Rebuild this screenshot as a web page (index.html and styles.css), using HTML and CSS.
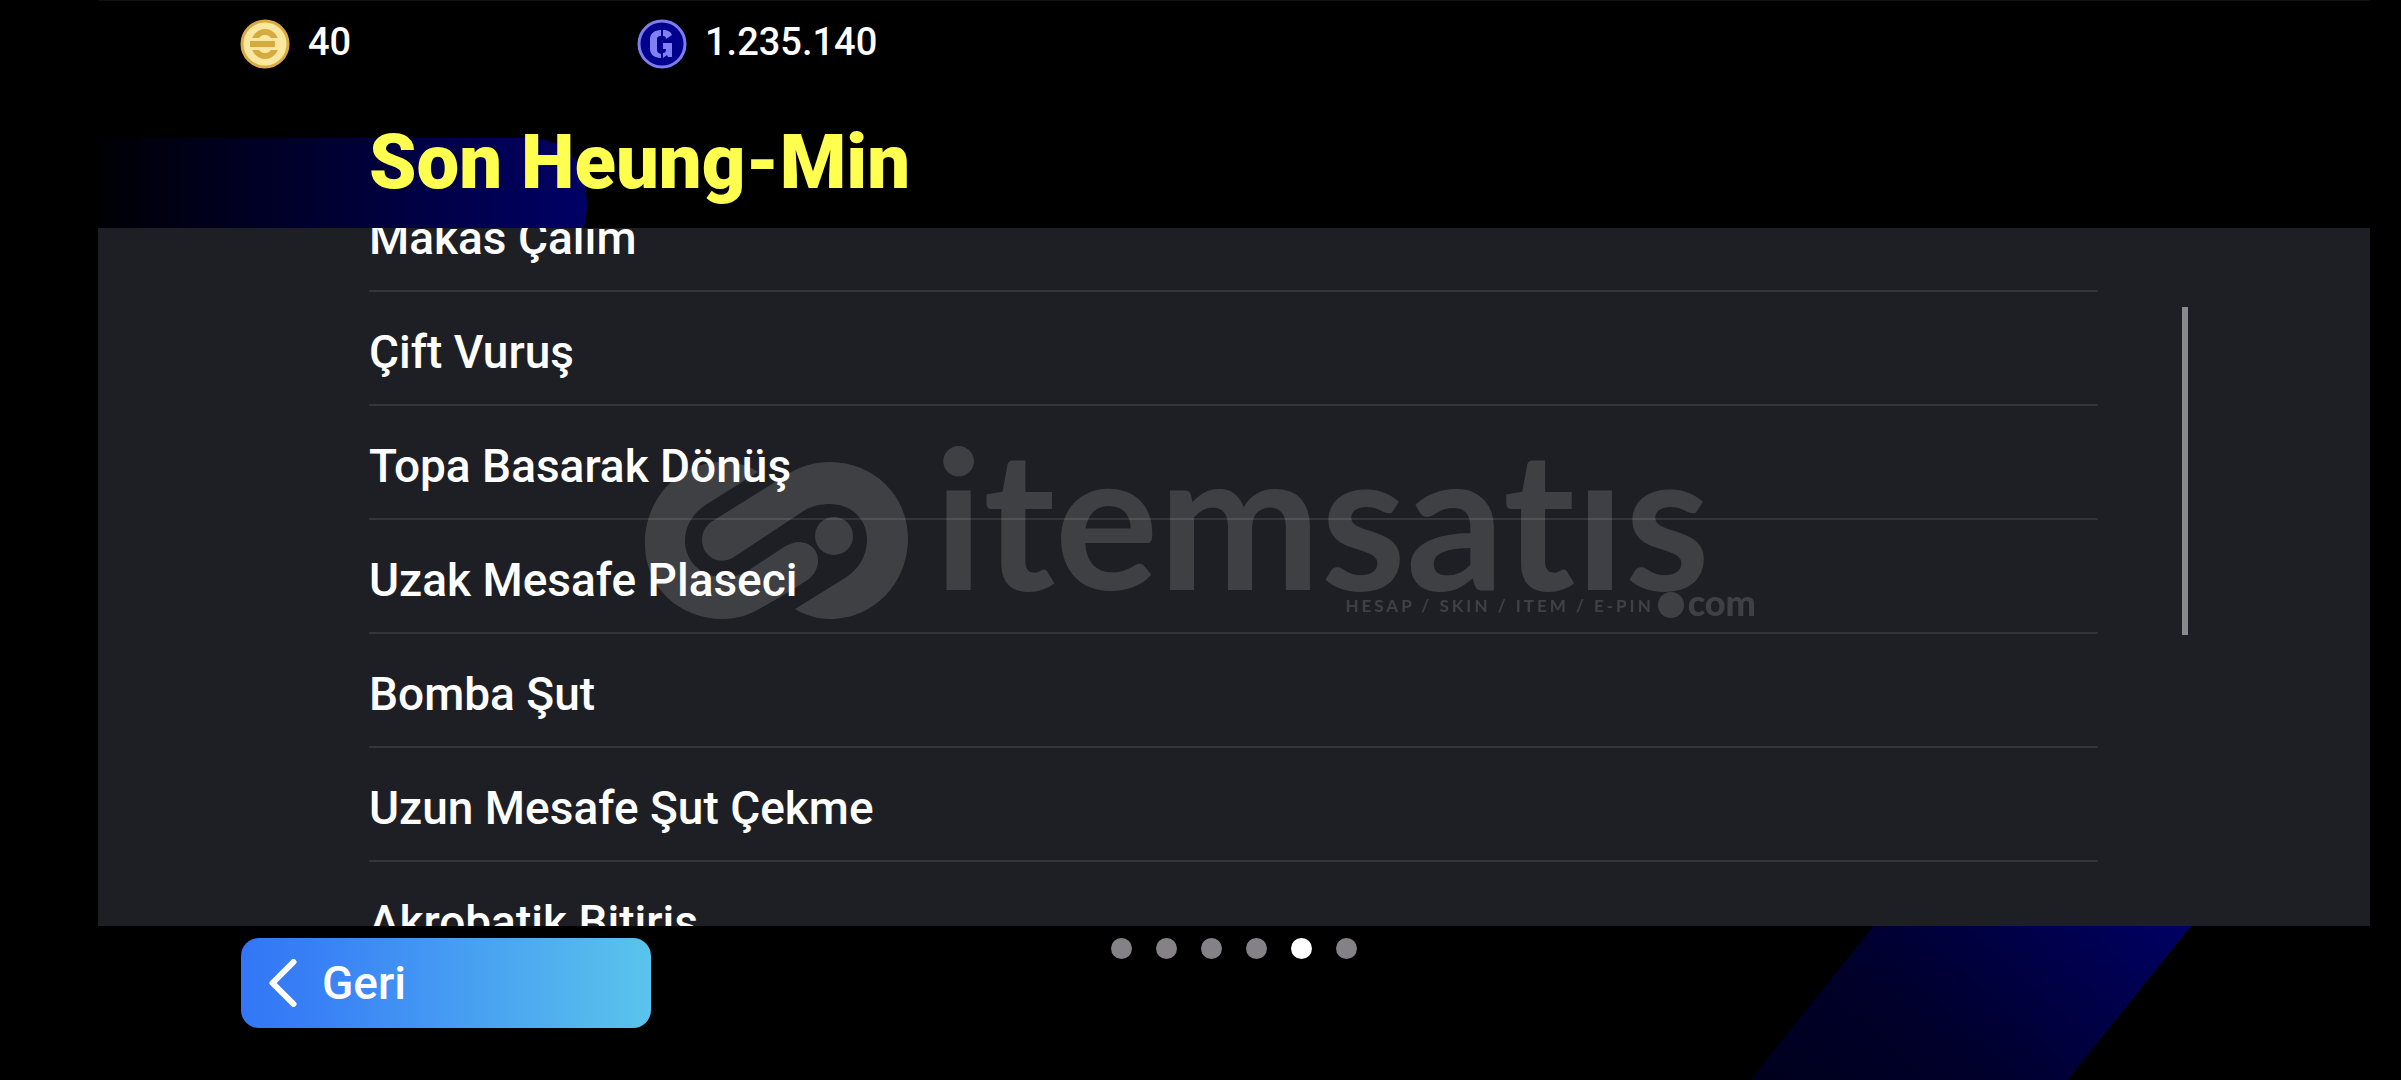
FILE: index.html
```
<!DOCTYPE html>
<html lang="tr">
<head>
  <meta charset="UTF-8">
  <meta name="viewport" content="width=device-width, initial-scale=1.0">
  <title>Son Heung-Min</title>
  <link rel="stylesheet" href="styles.css">
</head>
<body>
  <div class="stage">
    <header class="top">
      <div class="wallet">
        <div class="balance">
          <svg class="coin" viewBox="0 0 50 50" aria-hidden="true">
            <circle cx="25" cy="25" r="23" fill="#fae7a0" stroke="#d9ab42" stroke-width="3"/>
            <g fill="#d5aa40">
              <path d="M12 19C15 13 20 10 25 10S35 13 38 19H31C29 16.500 27 16 25 16S21 16.500 19 19Z"/>
              <path d="M12 31C15 37 20 40 25 40S35 37 38 31H31C29 33.500 27 34 25 34S21 33.500 19 31Z"/>
              <path d="M10 22H35V28H10Z"/>
            </g>
          </svg>
          <span>40</span>
        </div>
        <div class="balance">
          <svg class="coin" viewBox="0 0 50 50" aria-hidden="true">
            <circle cx="25" cy="25" r="23" fill="#00008c" stroke="#7d7df0" stroke-width="3"/>
            <g fill="#8080f2">
              <path d="M24 11V17C21 17 20 18 20 21V30C20 33 21 34 24 35V39C17 39 13 35 13 30V20C13 15 17 11 24 11Z"/>
              <path d="M26 11C31 11 34 13 35 16L29 20C29 18 28 17 26 17Z"/>
              <path d="M26 24H35V38H31L30 36L26 39V34C28 34 29 33 29 30H26Z"/>
            </g>
          </svg>
          <span>1.235.140</span>
        </div>
      </div>
      <div class="title-row">
        <svg class="ribbon" viewBox="0 0 489 90" aria-hidden="true">
          <defs>
            <linearGradient id="ribbonFill">
              <stop offset="0" stop-color="#000005"/>
              <stop offset="1" stop-color="#000066"/>
            </linearGradient>
          </defs>
          <path fill="url(#ribbonFill)" d="M0 0H425C462 0 478 16 484 36C490 55 490 72 486 90H0Z"/>
        </svg>
        <h1>Son Heung-Min</h1>
      </div>
    </header>

    <main class="panel">
      <ul class="skills">
        <li>Makas Çalım</li>
        <li>Çift Vuruş</li>
        <li>Topa Basarak Dönüş</li>
        <li>Uzak Mesafe Plaseci</li>
        <li>Bomba Şut</li>
        <li>Uzun Mesafe Şut Çekme</li>
        <li>Akrobatik Bitiriş</li>
      </ul>
      <div class="scrollbar"></div>
    </main>

    <footer class="bottom">
      <div class="stripe"></div>
      <button class="back-btn" type="button">
        <svg viewBox="0 0 28 48" aria-hidden="true">
          <path d="M24.500 3L3.500 24L24.500 45" fill="none" stroke="#fff" stroke-width="6" stroke-linecap="round" stroke-linejoin="round"/>
        </svg>
        Geri
      </button>
      <nav class="pager">
        <button type="button" aria-label="1"></button>
        <button type="button" aria-label="2"></button>
        <button type="button" aria-label="3"></button>
        <button type="button" aria-label="4"></button>
        <button type="button" aria-label="5" class="active"></button>
        <button type="button" aria-label="6"></button>
      </nav>
    </footer>
  </div>

  <div class="watermark">
    <svg class="mark" viewBox="0 0 263 157" fill="#fff" aria-hidden="true">
      <path d="M113 10C103 3 91 0 78 0C34 0 0 36 0 82C0 125 34 157 78 157C92 157 104 153 116 146C134 136 150 126 164 117C180 103 174 81 154 80C149 80 144 82 139 85L101 110C94 114 87 115 78 115C56 115 40 99 40 79C40 63 49 50 62 42Z"/>
      <path d="M143 12C156 4 170 0 185 0C229 0 263 34 263 76C263 121 229 157 185 157C172 157 160 153 150 147L200 116C214 107 222 94 222 77C222 57 206 42 185 42C176 42 167 44 160 48L89 95C73 105 57 93 57 78C57 71 60 65 66 60Z"/>
      <circle cx="189" cy="74" r="19"/>
    </svg>
    <div class="brand">
      <!-- the round dot below stands for the cedilla of the last letter -->
      <span class="word">itemsatıs</span>
      <span class="tagline">HESAP / SKIN / ITEM / E-PIN<i class="dot"></i><b>com</b></span>
    </div>
  </div>
</body>
</html>
```
FILE: styles.css
```
* {
  margin: 0;
  padding: 0;
  box-sizing: border-box;
}

body {
  height: 100vh;
  background: #000;
  color: #fff;
  font-family: 'Roboto', sans-serif;
  font-weight: 500;
  overflow: hidden;
}

.stage {
  display: flex;
  flex-direction: column;
  height: 100%;
  margin: 0 31px 0 98px;
  border-top: 1px solid #111;
}

.top {
  flex: none;
}

.wallet {
  display: flex;
  height: 137px;
  padding: 18px 0 0 142px;
}

.balance {
  display: flex;
  align-items: center;
  gap: 18px;
  width: 397px;
  height: 50px;
  font-size: 38px;
  line-height: 44px;
}

.balance span {
  padding-bottom: 5px;
}

.coin {
  width: 50px;
  height: 50px;
}

.title-row {
  display: grid;
  height: 90px;
}

.title-row > * {
  grid-area: 1 / 1;
}

.ribbon {
  width: 489px;
  height: 90px;
}

h1 {
  padding-left: 271px;
  color: #ffff50;
  font-size: 76px;
  font-weight: 900;
  line-height: 48px;
}

.panel {
  flex: 1;
  display: flex;
  gap: 84px;
  min-height: 0;
  padding: 0 182px 0 271px;
  background: #1e1f24;
  overflow: hidden;
}

/* list is scrolled a little, so the first and last rows are cut */
.skills {
  flex: 1;
  margin-top: -50px;
  list-style: none;
}

.skills li {
  height: 114px;
  padding-top: 32px;
  border-bottom: 2px solid #333439;
  font-size: 46px;
  line-height: 56px;
}

.scrollbar {
  width: 6px;
  height: 328px;
  margin-top: 79px;
  background: #8a8a8c;
}

.bottom {
  flex: none;
  position: relative;
  display: grid;
  grid-template-columns: 1fr auto 1fr;
  align-items: start;
  height: 154px;
  padding-top: 12px;
}

.stripe {
  position: absolute;
  top: 0;
  right: 179px;
  width: 441px;
  height: 154px;
  background: linear-gradient(222deg, #000064, #00002c 60%, #00001c);
  clip-path: polygon(28% 0, 100% 0, 72% 100%, 0 100%);
}

.back-btn {
  display: flex;
  align-items: center;
  gap: 25px;
  width: 410px;
  height: 90px;
  margin-left: 143px;
  padding-left: 28px;
  border: none;
  border-radius: 18px;
  background: linear-gradient(90deg, #3276f6, #3880f6 18%, #5ac4ec);
  color: #fff;
  font: inherit;
  font-size: 46px;
  cursor: pointer;
}

.back-btn svg {
  width: 28px;
  height: 48px;
}

.pager {
  display: flex;
  gap: 24px;
}

.pager button {
  width: 21px;
  height: 21px;
  border: none;
  border-radius: 50%;
  background: #848286;
}

.pager .active {
  background: #fff;
}

/* site logo laid over the middle of the page */
.watermark {
  position: fixed;
  inset: 0;
  display: flex;
  align-items: center;
  justify-content: center;
  gap: 26px;
  opacity: 0.15;
  pointer-events: none;
}

.mark {
  width: 263px;
  height: 157px;
}

.brand {
  display: flex;
  flex-direction: column;
  font-family: 'Lato', sans-serif;
  font-weight: 700;
}

.word {
  margin: 0 46px 24px 0;
  font-size: 194px;
  font-variant-ligatures: none;
  line-height: 106px;
}

.tagline {
  display: flex;
  align-items: center;
  justify-content: flex-end;
  height: 27px;
  font-size: 17px;
  letter-spacing: 3px;
}

.dot {
  width: 26px;
  height: 26px;
  margin: 0 4px;
  border-radius: 50%;
  background: #fff;
}

.tagline b {
  font-size: 36px;
  line-height: 20px;
  letter-spacing: 0;
  padding-bottom: 6px;
}
```
